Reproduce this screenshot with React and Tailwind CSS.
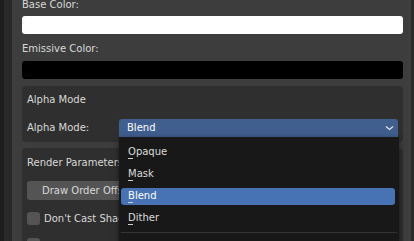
import React from 'react';

const fontStack = { fontFamily: '"DejaVu Sans", "Liberation Sans", sans-serif' };

const Accel = ({ letter }) => (
    <span className="relative">
        {letter}
        <span className="absolute left-0 top-[12px] w-[5px] h-[1px] bg-[#cfcfcf]" />
    </span>
);

const menuItems = ['Opaque', 'Mask', 'Blend', 'Dither'];

const App = () => {
    const selected = 'Blend';

    return (
        <div
            className="relative w-[414px] h-[241px] overflow-hidden flex bg-[#1d1d1d] text-[10px] leading-[12px] text-[#d9d9d9]"
            style={fontStack}
        >
            <div className="w-[4px] shrink-0 bg-[#1d1d1d]" />
            <div className="w-[8px] shrink-0 bg-[#292929]" />

            {/* material properties panel */}
            <div className="flex-1 bg-[#3d3d3d] pl-[10px] pr-[8px] flex flex-col">
                <div className="shrink-0 -mt-[1px] h-[12px]">Base Color:</div>
                <div className="shrink-0 mt-[5px] h-[18px] rounded-[3px] bg-white" />

                <div className="shrink-0 mt-[9px] h-[12px]">Emissive Color:</div>
                <div className="shrink-0 mt-[6px] h-[18px] rounded-[3px] bg-black" />

                {/* Alpha Mode subpanel */}
                <section className="shrink-0 mt-[7px] h-[56px] rounded-[4px] bg-[#2f2f2f] px-[5px] pt-[8px] flex flex-col">
                    <div className="shrink-0 h-[12px]">Alpha Mode</div>
                    <div className="shrink-0 mt-[13px] h-[18px] flex items-center">
                        <span className="w-[92px]">Alpha Mode:</span>
                        <div className="flex-1 h-[18px] rounded-t-[3px] bg-[#405e8e] flex items-center justify-between pl-[8px] pr-[4px] text-white">
                            <span>Blend</span>
                            <svg width="9" height="6" viewBox="0 0 9 6" fill="none">
                                <path d="M1 1.5 L4.5 4.5 L8 1.5" stroke="#e6e6e6" strokeWidth="1.2" />
                            </svg>
                        </div>
                    </div>
                </section>

                {/* Render Parameters subpanel, mostly hidden behind the open menu */}
                <section className="shrink-0 mt-[6px] h-[120px] rounded-t-[4px] bg-[#2f2f2f] px-[5px] pt-[9px] flex flex-col">
                    <div className="shrink-0 h-[12px] w-[92px] overflow-hidden whitespace-nowrap">Render Parameters</div>
                    <div className="shrink-0 mt-[12px] h-[19px] rounded-[3px] bg-[#545454] flex items-center pl-[15px]">
                        <span className="w-[77px] overflow-hidden whitespace-nowrap">Draw Order Offset</span>
                    </div>
                    <div className="shrink-0 mt-[12px] h-[13px] flex items-center gap-[4px]">
                        <span className="shrink-0 w-[13px] h-[13px] rounded-[3px] bg-[#545454]" />
                        <span className="w-[75px] overflow-hidden whitespace-nowrap">Don't Cast Shadows</span>
                    </div>
                    <div className="shrink-0 mt-[13px] h-[13px] flex items-center">
                        <span className="w-[13px] h-[13px] rounded-[3px] bg-[#545454]" />
                    </div>
                </section>
            </div>

            <div className="w-[3px] shrink-0 bg-[#2b2b2b]" />

            {/* open enum menu */}
            <div className="absolute left-[119px] top-[137px] w-[280px] h-[110px] bg-[#181818] shadow-[0_2px_6px_rgba(0,0,0,0.5)] px-[2px] pt-[4px]">
                {menuItems.map((item) => (
                    <div key={item} className="h-[22px] flex items-center">
                        <div
                            className={`w-[274px] h-[17px] rounded-[3px] flex items-center pl-[7px] ${
                                item === selected ? 'bg-[#4772b3] text-white' : 'text-[#dcdcdc]'
                            }`}
                        >
                            <Accel letter={item[0]} />
                            {item.slice(1)}
                        </div>
                    </div>
                ))}
                <div className="mt-[3px] h-[1px] bg-[#333333]" />
            </div>
        </div>
    );
};

export default App;
